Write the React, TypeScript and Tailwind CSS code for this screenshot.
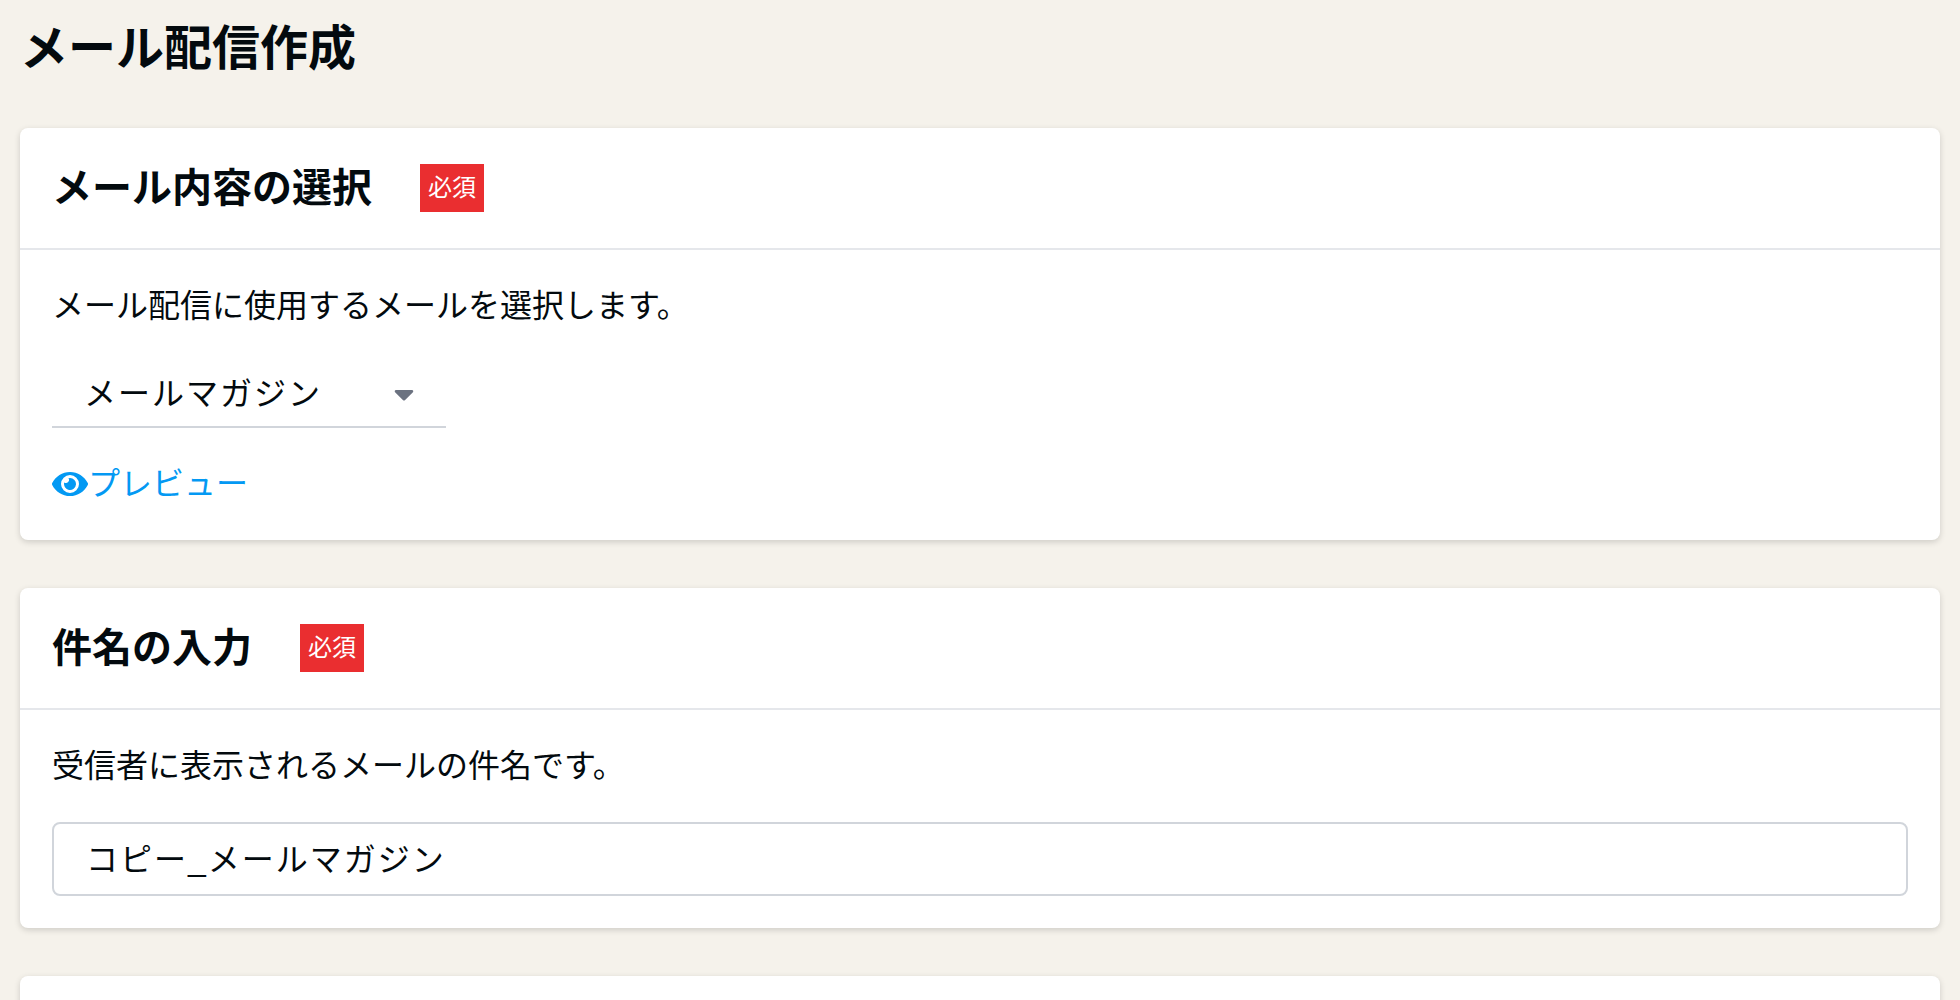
import { ReactNode } from "react";
import { FaCaretDown, FaEye } from "react-icons/fa";

function Card({ title, children }: { title?: string; children?: ReactNode }) {
  return (
    <section className="rounded-lg bg-white shadow-[0_2px_6px_rgba(0,0,0,0.16)]">
      <header className="flex h-[122px] items-center gap-12 border-b-2 border-[#e5e7eb] px-8">
        {title && (
          <>
            <h2 className="text-[40px] leading-[60px] font-bold">{title}</h2>
            <span className="bg-[#ea2e30] px-2 text-2xl leading-[48px] text-white">必須</span>
          </>
        )}
      </header>
      <div className="px-8 pt-8 pb-8">{children}</div>
    </section>
  );
}

export default function App() {
  return (
    <main className="h-screen overflow-hidden bg-[#f5f2eb] px-5 font-['Inter','Noto_Sans_CJK_JP',sans-serif] text-[#030a0e]">
      <h1 className="pt-3 pb-11 text-5xl leading-[72px] font-bold">メール配信作成</h1>
      <div className="flex flex-col gap-12">
        <Card title="メール内容の選択">
          <label htmlFor="mail" className="block text-[32px] leading-[48px]">
            メール配信に使用するメールを選択します。
          </label>
          <div className="relative mt-4 w-[394px] border-b-2 border-[#d1d5db]">
            <select
              id="mail"
              className="block h-20 w-full appearance-none bg-transparent px-8 pt-4 text-[32px] tracking-[2px] outline-none"
            >
              <option>メールマガジン</option>
            </select>
            <FaCaretDown className="pointer-events-none absolute top-8 right-[26px] size-8 text-[#6b7280]" />
          </div>
          <a href="#preview" className="mt-8 inline-flex items-center text-[32px] leading-[48px] text-[#0399f3]">
            <FaEye className="size-9" />
            プレビュー
          </a>
        </Card>
        <Card title="件名の入力">
          <label htmlFor="subject" className="block text-[32px] leading-[48px]">
            受信者に表示されるメールの件名です。
          </label>
          <input
            id="subject"
            defaultValue="コピー_メールマガジン"
            className="mt-8 block h-[74px] w-full rounded-lg border-2 border-[#d1d5db] px-8 pb-1 font-['Liberation_Sans','Noto_Sans_CJK_JP',sans-serif] text-[32px] tracking-[2px] outline-none"
          />
        </Card>
        <Card />
      </div>
    </main>
  );
}
